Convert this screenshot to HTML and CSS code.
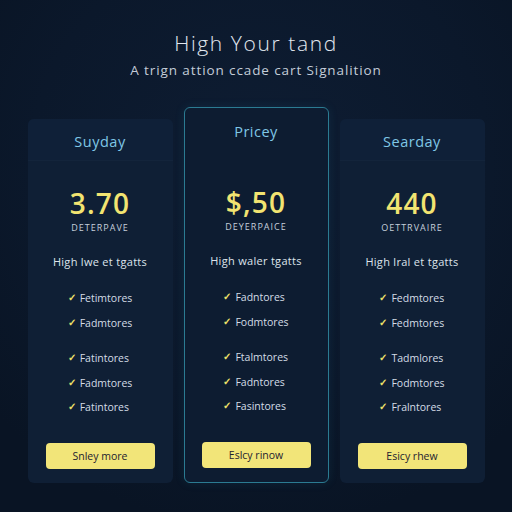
FILE: index.html
```html
<!DOCTYPE html>
<html lang="en">
<head>
<meta charset="utf-8">
<title>Pricing</title>
<link rel="stylesheet" href="styles.css">
</head>
<body>
<main class="page">
  <header class="hero">
    <h1 class="hero-title">High Your tand</h1>
    <p class="hero-sub">A trign attion ccade cart Signalition</p>
  </header>
  <section class="plans">
    <article class="card">
      <div class="card-head"><h2 class="card-title">Suyday</h2></div>
      <div class="price">3.70</div>
      <div class="price-label">DETERPAVE</div>
      <p class="desc">High lwe et tgatts</p>
      <ul class="features">
        <li class="feat"><span class="check">✓</span>Fetimtores</li>
        <li class="feat"><span class="check">✓</span>Fadmtores</li>
        <li class="feat feat-gap"><span class="check">✓</span>Fatintores</li>
        <li class="feat"><span class="check">✓</span>Fadmtores</li>
        <li class="feat"><span class="check">✓</span>Fatintores</li>
      </ul>
      <button class="btn">Snley more</button>
    </article>
    <article class="card card-featured">
      <div class="card-head"><h2 class="card-title">Pricey</h2></div>
      <div class="price">$,50</div>
      <div class="price-label">DEYERPAICE</div>
      <p class="desc">High waler tgatts</p>
      <ul class="features">
        <li class="feat"><span class="check">✓</span>Fadntores</li>
        <li class="feat"><span class="check">✓</span>Fodmtores</li>
        <li class="feat feat-gap"><span class="check">✓</span>Ftalmtores</li>
        <li class="feat"><span class="check">✓</span>Fadntores</li>
        <li class="feat"><span class="check">✓</span>Fasintores</li>
      </ul>
      <button class="btn">Eslcy rinow</button>
    </article>
    <article class="card">
      <div class="card-head"><h2 class="card-title">Searday</h2></div>
      <div class="price">440</div>
      <div class="price-label">OETTRVAIRE</div>
      <p class="desc">High lral et tgatts</p>
      <ul class="features">
        <li class="feat"><span class="check">✓</span>Fedmtores</li>
        <li class="feat"><span class="check">✓</span>Fedmtores</li>
        <li class="feat feat-gap"><span class="check">✓</span>Tadmlores</li>
        <li class="feat"><span class="check">✓</span>Fodmtores</li>
        <li class="feat"><span class="check">✓</span>Fralntores</li>
      </ul>
      <button class="btn">Esicy rhew</button>
    </article>
  </section>
</main>
</body>
</html>
```
FILE: styles.css
```css
* { box-sizing: border-box; }
html, body { margin: 0; padding: 0; }
body {
  width: 512px;
  height: 512px;
  overflow: hidden;
  font-family: "Open Sans", "Lato", sans-serif;
  color: #dfe6ee;
  background:
    radial-gradient(circle at 260px 170px, #0e1d33 0, #0b182b 230px, #091424 360px);
}
.page {
  display: flex;
  flex-direction: column;
  align-items: center;
}
.hero {
  text-align: center;
  padding-top: 30px;
}
.hero-title {
  margin: 0;
  font-size: 21px;
  line-height: 26px;
  font-weight: 300;
  color: #e2e8f0;
  letter-spacing: 1.6px;
}
.hero-sub {
  margin: 5px 0 0;
  font-size: 13.5px;
  line-height: 18px;
  font-weight: 400;
  color: #c3ccd8;
  letter-spacing: 0.9px;
}
.plans {
  display: flex;
  align-items: flex-end;
  gap: 11px;
  margin-top: 28px;
}
.card {
  width: 145px;
  display: flex;
  flex-direction: column;
  align-items: center;
  background: #0f1f35;
  border-radius: 6px;
  padding-bottom: 14px;
}
.card-featured {
  background: #0d1c31;
  border: 1px solid #2b7b92;
  box-shadow: 0 0 10px rgba(40, 130, 160, 0.15);
}
.card-head {
  align-self: stretch;
  text-align: center;
  padding: 14px 0 9px;
  background: #0f2038;
  border-bottom: 1px solid rgba(255, 255, 255, 0.02);
  border-radius: 6px 6px 0 0;
}
.card-featured .card-head {
  padding: 15px 0 19px;
  background: transparent;
  border-bottom: 0;
}
.card-title {
  margin: 0;
  font-size: 14.5px;
  line-height: 18px;
  font-weight: 400;
  color: #7fc7e6;
  letter-spacing: 0.5px;
}
.price {
  margin-top: 26px;
  font-size: 28px;
  line-height: 32px;
  font-weight: 600;
  color: #f2e471;
  letter-spacing: 1.2px;
}
.price-label {
  margin-top: 3px;
  font-size: 9px;
  line-height: 12px;
  color: #c6cfdb;
  letter-spacing: 1px;
}
.desc {
  margin: 20px 0 0;
  font-size: 11px;
  line-height: 16px;
  color: #dde4ec;
  letter-spacing: 0.3px;
}
.features {
  list-style: none;
  margin: 20px 0 0;
  padding: 0;
  display: flex;
  flex-direction: column;
  gap: 8.5px;
}
.feat {
  display: flex;
  align-items: center;
  height: 16px;
  font-size: 10.5px;
  line-height: 16px;
  color: #d4dce6;
}
.feat-gap { margin-top: 11px; }
.check {
  color: #ece06a;
  font-size: 9.5px;
  line-height: 16px;
  font-weight: 700;
  margin-right: 4px;
}
.btn {
  margin-top: 28px;
  width: 109px;
  height: 26px;
  border: 0;
  border-radius: 4px;
  background: #f2e579;
  color: #1d2230;
  font-family: "Open Sans", "Lato", sans-serif;
  font-size: 10.5px;
}
```
